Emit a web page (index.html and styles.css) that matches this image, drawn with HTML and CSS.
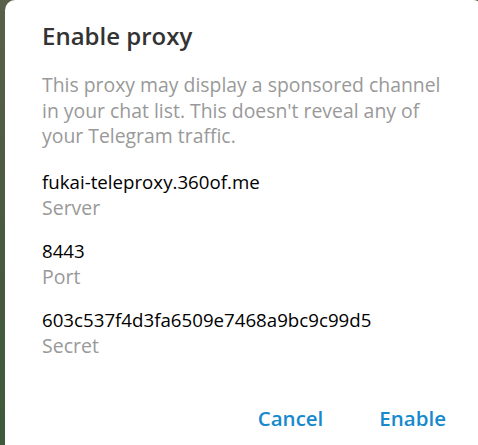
FILE: index.html
```html
<!DOCTYPE html>
<html lang="en">
<head>
<meta charset="utf-8">
<title>Enable proxy</title>
<link rel="stylesheet" href="styles.css">
</head>
<body>
<div class="dialog">
  <h1 class="title">Enable proxy</h1>
  <p class="desc">This proxy may display a sponsored channel in your chat list. This doesn't reveal any of your Telegram traffic.</p>
  <div class="fields">
    <div class="field">
      <div class="value">fukai-teleproxy.360of.me</div>
      <div class="label">Server</div>
    </div>
    <div class="field">
      <div class="value">8443</div>
      <div class="label">Port</div>
    </div>
    <div class="field">
      <div class="value">603c537f4d3fa6509e7468a9bc9c99d5</div>
      <div class="label">Secret</div>
    </div>
  </div>
  <div class="buttons">
    <button class="btn">Cancel</button>
    <button class="btn">Enable</button>
  </div>
</div>
</body>
</html>
```

FILE: styles.css
```css
html, body {
  margin: 0;
  padding: 0;
  height: 100%;
  overflow: hidden;
}
body {
  background: linear-gradient(180deg, #5a6049 0%, #4a5a40 50%, #3e5a3b 100%);
  font-family: "Open Sans", "Noto Sans", sans-serif;
}
.dialog {
  margin-left: 5px;
  width: 478px;
  height: 100%;
  box-sizing: border-box;
  background: #ffffff;
  border-radius: 10px 10px 0 0;
  padding: 20px 0 0 37px;
}
.title {
  margin: 0;
  font-size: 24px;
  line-height: 32px;
  font-weight: 600;
  color: #333333;
}
.desc {
  margin: 20px 0 0 0;
  width: 410px;
  font-size: 19.4px;
  line-height: 25.5px;
  color: #999999;
}
.fields {
  margin-top: 20px;
  display: flex;
  flex-direction: column;
  gap: 17px;
}
.value {
  font-size: 18.7px;
  line-height: 26px;
  color: #000000;
}
.label {
  font-size: 19.5px;
  line-height: 26px;
  color: #999999;
}
.buttons {
  margin-top: 46px;
  display: flex;
  justify-content: flex-end;
  gap: 56px;
  padding-right: 37px;
}
.btn {
  border: 0;
  background: none;
  padding: 0;
  font-family: inherit;
  font-size: 20.5px;
  line-height: 26px;
  font-weight: 600;
  color: #168acd;
  cursor: pointer;
}
```
